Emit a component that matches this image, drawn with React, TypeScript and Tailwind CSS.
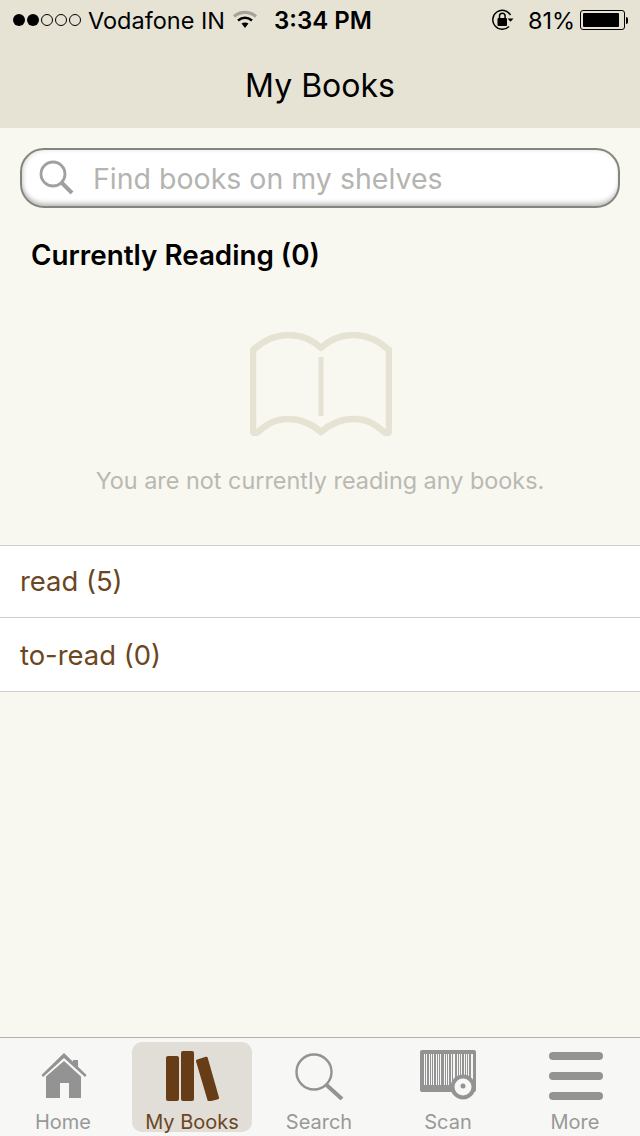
import React from 'react';

const brown = '#663d17';

const StatusBar: React.FC = () => (
  <div className="flex h-[40px] items-center pl-[13px] text-[23.500px] leading-none text-black">
    <div className="flex gap-[2px]">
      <span className="h-[12px] w-[12px] rounded-full bg-black" />
      <span className="h-[12px] w-[12px] rounded-full bg-black" />
      <span className="h-[12px] w-[12px] rounded-full border border-black" />
      <span className="h-[12px] w-[12px] rounded-full border border-black" />
      <span className="h-[12px] w-[12px] rounded-full border border-black" />
    </div>
    <span className="ml-[7px] w-[145px] whitespace-nowrap pt-[2px]">Vodafone IN</span>
    <svg width="24" height="20" viewBox="0 0 24 20">
      <path d="M1 6.500C7.500 1 16.500 1 23 6.500" fill="none" stroke="#a5a39a" strokeWidth="3.200" />
      <path d="M5 10.500C9.500 7 14.500 7 19 10.500" fill="none" stroke="#000" strokeWidth="2.600" />
      <path d="M8.500 13.500C10.800 12 13.200 12 15.500 13.500L12 18Z" fill="#000" />
    </svg>
    <span className="ml-[17px] w-[98px] whitespace-nowrap pt-[2px] text-[24px] font-semibold">3:34 PM</span>
    <svg width="26" height="26" viewBox="0 0 26 26" className="ml-[118px]">
      <path d="M19 19.500A9.500 9.500 0 1 1 20.500 8" fill="none" stroke="#000" strokeWidth="1.500" />
      <path d="M17.500 11.500h6l-3 3.200Z" fill="#000" />
      <rect x="7.500" y="11" width="9.500" height="8" rx="1" fill="#000" />
      <path d="M9.500 11V9a2.800 2.800 0 0 1 5.600 0v2" fill="none" stroke="#000" strokeWidth="1.500" />
    </svg>
    <span className="ml-[12px] w-[46px] whitespace-nowrap pt-[2px]">81%</span>
    <div className="ml-[6px] flex items-center">
      <div className="flex h-[20px] w-[45px] rounded-[3px] border border-black p-[2px]">
        <div className="h-full w-[36px] rounded-[1px] bg-black" />
      </div>
      <div className="ml-[1px] h-[7px] w-[2px] rounded-r-full bg-black" />
    </div>
  </div>
);

const HomeIcon = () => (
  <svg width="46" height="46" viewBox="0 0 46 46" fill="#939393" className="mr-[1px]">
    <path d="M32 8h5v10l-5-4.500Z" />
    <path d="M23 1L45.500 23L44 25L23 6L2 25L0.500 23Z" />
    <path d="M23 9L40 24.500V46H28V31H19V46H5V24.500Z" />
  </svg>
);

const BooksIcon = () => (
  <svg width="54" height="50" viewBox="0 0 54 50" fill={brown} className="mt-[2px] ml-[2px]">
    <rect x="0" y="5" width="13" height="45" rx="2" />
    <rect x="15" y="0" width="13" height="50" rx="2" />
    <path d="M31.200 8.500L39.800 5.800Q41.300 5.400 41.700 6.800L53 46.500Q53.400 47.900 52 48.300L43.400 50.500Q42 50.900 41.600 49.500L30 10.300Q29.700 8.900 31.200 8.500Z" />
  </svg>
);

const SearchIcon = () => (
  <svg width="50" height="48" viewBox="0 0 50 48" fill="none" stroke="#939393" className="mt-[2px]">
    <circle cx="19" cy="20" r="17.500" strokeWidth="2.400" />
    <path d="M31.500 33L47 47" strokeWidth="4" />
  </svg>
);

const barcodeBars = [
  [5, 1], [7, 2], [10, 1], [12, 1], [14, 2], [17, 1], [19, 1], [21, 3], [25, 1], [27, 1], [29, 2], [32, 1],
  [35, 2], [38, 1], [40, 1], [42, 2], [45, 1], [47, 1], [49, 2],
];

const ScanIcon = () => (
  <svg width="58" height="52" viewBox="0 0 58 52" className="mt-[2px] ml-[2px]">
    <rect x="0" y="0" width="56" height="42" rx="2" fill="#939393" />
    <rect x="4" y="4" width="49" height="31" fill="#f7f7f5" />
    {barcodeBars.map(([x, w]) => (
      <rect key={x} x={x} y="4" width={w} height="31" fill="#939393" />
    ))}
    <circle cx="43" cy="37" r="12.500" fill="#939393" />
    <circle cx="43" cy="37" r="8.500" fill="#f7f7f5" />
    <circle cx="43" cy="36" r="2.500" fill="#939393" />
  </svg>
);

const MoreIcon = () => (
  <div className="mt-[2px] flex h-[48px] w-[54px] flex-col justify-between">
    <div className="h-[8px] rounded-full bg-[#939393]" />
    <div className="h-[8px] rounded-full bg-[#939393]" />
    <div className="h-[8px] rounded-full bg-[#939393]" />
  </div>
);

const tabs = [
  { label: 'Home', icon: <HomeIcon />, active: false, labelClass: 'mr-[2px] text-[#999999]' },
  { label: 'My Books', icon: <BooksIcon />, active: true, labelClass: 'text-[#6b461f]' },
  { label: 'Search', icon: <SearchIcon />, active: false, labelClass: 'mr-[2px] text-[#999999]' },
  { label: 'Scan', icon: <ScanIcon />, active: false, labelClass: 'text-[#999999]' },
  { label: 'More', icon: <MoreIcon />, active: false, labelClass: 'mr-[2px] text-[#999999]' },
];

export default function App() {
  return (
    <div className="flex h-[1136px] w-[640px] flex-col overflow-hidden bg-[#f8f7f0] font-['Inter',sans-serif]">
      <div className="h-[128px] shrink-0 bg-[#e6e3d5]">
        <StatusBar />
        <h1 className="mt-[21px] text-center text-[32px] leading-[50px] font-normal text-black">My Books</h1>
      </div>

      <div className="px-[20px] pt-[20px]">
        <div className="flex h-[60px] items-center rounded-[24px] border-2 border-[#85857f] bg-white pl-[17px] shadow-[inset_0_-5px_5px_-2px_rgba(0,0,0,0.22),inset_2px_0_4px_rgba(0,0,0,0.12)]">
          <svg width="36" height="36" viewBox="0 0 36 36" fill="none" stroke="#a0a0a0">
            <circle cx="14" cy="14" r="12" strokeWidth="2.800" />
            <path d="M23 23L33 33" strokeWidth="4" />
          </svg>
          <span className="ml-[18px] pt-[2px] text-[28.500px] text-[#b4b4b0]">Find books on my shelves</span>
        </div>
      </div>

      <h2 className="mt-[27px] pl-[31px] text-[27.800px] leading-[40px] font-semibold text-black">Currently Reading (0)</h2>

      <div className="mt-[57px] flex flex-col items-center">
        <svg width="142" height="104" viewBox="0 0 142 104" fill="none" stroke="#e6e3d5" strokeWidth="6.500" strokeLinejoin="round" className="ml-[1px]">
          <path d="M3 18C14 8 26 3 38 3C52 3 63 8 71 16C79 8 90 3 104 3C116 3 128 8 139 18V99C139 101 137 102 134 100C126 93 118 87 104 87C90 87 80 92 71 100C62 92 52 87 38 87C24 87 16 93 8 100C5 102 3 101 3 99Z" />
          <path d="M71 25V84" strokeWidth="5" />
        </svg>
        <p className="mt-[29px] text-[23.400px] leading-[32px] text-[#b9b9b3]">You are not currently reading any books.</p>
      </div>

      <div className="mt-[48px] border-t border-[#cfcfc9]">
        <div className="flex h-[72px] items-center border-b border-[#cfcfc9] bg-white pl-[20px] text-[27.400px] text-[#6b461f]">read (5)</div>
        <div className="flex h-[74px] items-center border-b border-[#cfcfc9] bg-white pt-[2px] pl-[20px] text-[27.400px] text-[#6b461f]">to-read (0)</div>
      </div>

      <div className="flex-1" />

      <div className="flex h-[99px] shrink-0 justify-center border-t border-[#b3b3ab] bg-[#f7f7f5] pt-[4px]">
        {tabs.map((tab) => (
          <div key={tab.label} className="flex w-[128px] justify-center">
            <div className={`flex h-[90px] w-[120px] flex-col items-center rounded-[10px] ${tab.active ? 'bg-[#e1ddd7]' : ''}`}>
              <div className="flex h-[66px] shrink-0 items-center justify-center">{tab.icon}</div>
              <span className={`mt-[2px] shrink-0 text-[20px] leading-[24px] ${tab.labelClass}`}>{tab.label}</span>
            </div>
          </div>
        ))}
      </div>
    </div>
  );
}
